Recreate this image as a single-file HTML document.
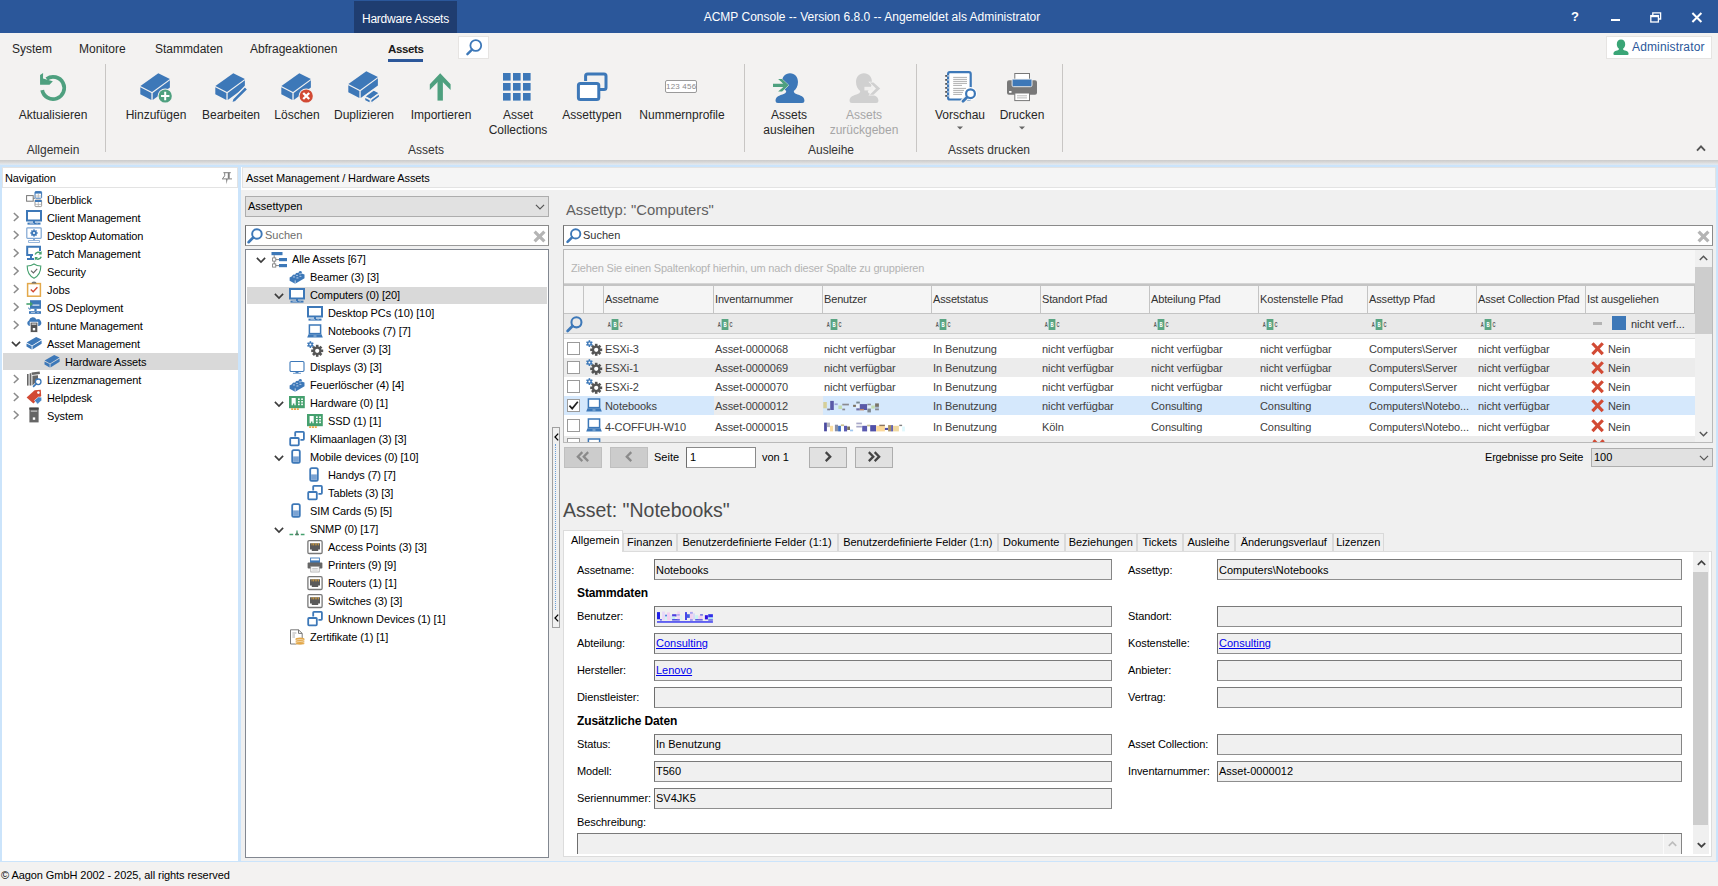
<!DOCTYPE html>
<html lang="de">
<head>
<meta charset="utf-8">
<title>ACMP Console</title>
<style>
*{box-sizing:border-box;margin:0;padding:0}
html,body{width:1718px;height:886px;overflow:hidden}
body{position:relative;background:#cbe4fb;font-family:"Liberation Sans",sans-serif;font-size:11px;color:#000;line-height:13px}
.abs{position:absolute}
.t{position:absolute;white-space:nowrap}
svg{position:absolute;overflow:visible}
#title{left:0;top:0;width:1718px;height:33px;background:#2b579a}
#ctx{left:354px;top:1px;width:103px;height:32px;background:#1f3d70;color:#fff;font-size:12px;line-height:14px}
#title .cap{left:0;width:1744px;text-align:center;top:10px;color:#fff;font-size:12px;line-height:14px}
#ribbon{left:0;top:33px;width:1718px;height:127px;background:#f3f2f1;font-size:12px;line-height:15px;color:#262626}
#ribshadow{left:0;top:160px;width:1718px;height:5px;background:linear-gradient(#cbcbcb,#dcdcdc 55%,#e2e6ea 80%,#dbe7f3)}
.rt{top:9px}
.sep{top:31px;width:1px;height:88px;background:#c8c6c4}
.bl{text-align:center;top:75px;transform:translateX(-50%)}
.gl{text-align:center;top:110px;transform:translateX(-50%);color:#333}
.dis{color:#a6a6a6}
.hdr{height:21px;top:167px;border:1px solid #e3e3e3;line-height:19px}
#status{left:0;top:862px;width:1718px;height:24px;background:#f3f2f1}
.row{position:absolute;left:0;height:18px;line-height:18px;white-space:nowrap}
.sel{background:#d9d9d9}
.combo{background:#e1e1e1;border:1px solid #adadad}
.sunk{background:#fff;border:1px solid #6e6e6e;border-top-color:#8a8a8a;border-right-color:#8a8a8a;border-bottom-color:#9a9a9a}
.inp{position:absolute;height:21px;background:#f0f0f0;border:1px solid #7a7a7a;border-left-color:#6e6e6e;border-right-color:#858585;border-bottom-color:#8e8e8e;line-height:19px;padding-left:1px;white-space:nowrap}
.lbl{position:absolute;white-space:nowrap;line-height:21px;letter-spacing:-0.1px}
a.lk{color:#0000ee;text-decoration:underline}
.gh{position:absolute;top:0;height:28px;border-right:1px solid #c4c4c4;line-height:26px;padding-left:1px;letter-spacing:-0.15px;white-space:nowrap;overflow:hidden}
.gc{position:absolute;top:0;height:100%;padding-left:1px;white-space:nowrap;overflow:hidden;color:#404040;letter-spacing:-0.08px}
.grow{position:absolute;left:1px;width:1131px;height:19px;line-height:19px}
.cb{position:absolute;left:3px;width:13px;height:13px;background:#fff;border:1px solid #9a9a9a}
.tab{position:absolute;top:365px;height:18px;background:#f0f0f0;border:1px solid #d9d9d9;border-bottom:none;line-height:16px;text-align:center;white-space:nowrap}
.pbtn{position:absolute;top:280px;height:21px;width:38px}
</style>
</head>
<body>
<svg width="0" height="0" style="position:absolute">
<defs>
<!-- 32px isometric box -->
<g id="bx32">
<path d="M1.4,14.1 L19.3,1.3 L30.9,7 L13,20 Z" fill="#3d78b8"/>
<path d="M1.3,15.2 L12.4,20.9 L12.4,28 L1.3,22.3 Z" fill="#3d78b8"/>
<path d="M13.7,20.9 L30.9,8.3 L30.9,15.4 L13.7,28 Z" fill="#3d78b8"/>
</g>
<!-- 16px box -->
<g id="bx16">
<path d="M0.6,7.6 L10.2,2 L15.6,4.6 L6,10.4 Z" fill="#3d78b8"/>
<path d="M0.5,8.5 L5.6,11.1 L5.6,14.4 L0.5,11.6 Z" fill="#3d78b8"/>
<path d="M6.5,11.1 L15.6,5.5 L15.6,8.8 L6.5,14.4 Z" fill="#3d78b8"/>
</g>
<!-- monitor 16 -->
<g id="mon">
<rect x="1" y="2" width="14" height="9.5" fill="#fff" stroke="#3d78b8" stroke-width="2"/>
<rect x="7" y="12" width="2" height="2" fill="#3d78b8"/>
<rect x="1.5" y="13.6" width="13" height="2" fill="#3d78b8"/>
<rect x="3.5" y="14.2" width="4.5" height="0.8" fill="#9dbbdc"/><rect x="10.5" y="14.2" width="1.2" height="0.8" fill="#9dbbdc"/>
</g>
<!-- laptop -->
<g id="lap">
<rect x="2.4" y="2" width="11.2" height="8.6" fill="#fff" stroke="#3d78b8" stroke-width="1.5"/>
<path d="M1.5,11.3 L14.5,11.3 L15.8,14.6 L0.2,14.6 Z" fill="#3d78b8"/>
<rect x="6.5" y="12.6" width="3" height="0.8" fill="#c4d6ea"/>
</g>
<!-- gears -->
<g id="gear">
<g transform="translate(10.2,9.8)">
<g fill="#555"><rect x="-1.3" y="-6" width="2.6" height="12"/><rect x="-1.3" y="-6" width="2.6" height="12" transform="rotate(45)"/><rect x="-1.3" y="-6" width="2.6" height="12" transform="rotate(90)"/><rect x="-1.3" y="-6" width="2.6" height="12" transform="rotate(135)"/></g>
<circle r="4.3" fill="#555"/><circle r="2.1" fill="#fff"/>
</g>
<g transform="translate(3.4,3.6)">
<g fill="#3d78b8"><rect x="-0.8" y="-3.4" width="1.6" height="6.8"/><rect x="-0.8" y="-3.4" width="1.6" height="6.8" transform="rotate(60)"/><rect x="-0.8" y="-3.4" width="1.6" height="6.8" transform="rotate(120)"/></g>
<circle r="2.3" fill="#3d78b8"/><circle r="1" fill="#fff"/>
</g>
</g>
<!-- display thin -->
<g id="disp">
<rect x="1" y="2.5" width="14" height="10" rx="1.2" fill="#fff" stroke="#3d78b8" stroke-width="1.1"/>
<rect x="6.5" y="12.5" width="3" height="1.6" fill="#3d78b8"/>
<rect x="4" y="13.8" width="8" height="1.2" fill="#8fb1d6"/>
</g>
<!-- lego brick -->
<g id="brick">
<path d="M0.6,8.4 L9.8,3.4 L15.5,5.6 L15.5,9.2 L6.2,14.8 L0.6,11.8 Z" fill="#3d78b8"/>
<path d="M6.2,11.4 L6.2,14.8" stroke="#dfe9f5" stroke-width="0.8"/>
<path d="M3.4,6.2 q1.5,-1.5 3,0 v1.2 h-3 Z M6.6,4.5 q1.5,-1.5 3,0 v1.2 h-3 Z M9.8,2.8 q1.5,-1.5 3,0 v1.2 h-3 Z" fill="#3d78b8"/>
<g fill="#a9c4e4"><ellipse cx="5" cy="7.9" rx="1.2" ry="0.6"/><ellipse cx="8" cy="6.3" rx="1.2" ry="0.6"/><ellipse cx="11" cy="4.8" rx="1.2" ry="0.6"/><ellipse cx="8.4" cy="8.9" rx="1.2" ry="0.6"/><ellipse cx="11.4" cy="7.3" rx="1.2" ry="0.6"/></g>
</g>
<!-- ram card -->
<g id="ram">
<rect x="0" y="1" width="15.8" height="12.2" fill="#45a06e"/>
<path d="M2.6,3 H6.7 V10.2 H5.4 V8.6 H3.9 V10.2 H2.6 Z" fill="#fff"/>
<g fill="#fff"><rect x="9" y="3.4" width="1.7" height="1.6"/><rect x="9" y="6" width="1.7" height="1.6"/><rect x="9" y="8.6" width="1.7" height="1.6"/><rect x="12.2" y="3.4" width="1.7" height="1.6"/><rect x="12.2" y="6" width="1.7" height="1.6"/><rect x="12.2" y="8.6" width="1.7" height="1.6"/></g>
<g fill="#e8a848"><rect x="2.2" y="13.2" width="2" height="1.8"/><rect x="5" y="13.2" width="2" height="1.8"/><rect x="7.8" y="13.2" width="2" height="1.8"/></g>
</g>
<!-- two windows -->
<g id="wins">
<path d="M6.2,5.6 L6.2,1.7 Q6.2,0.9 7,0.9 L14.1,0.9 Q14.9,0.9 14.9,1.7 L14.9,8 Q14.9,8.8 14.1,8.8 L11.4,8.8" fill="none" stroke="#3d78b8" stroke-width="1.8"/>
<rect x="1.2" y="7" width="8.6" height="7.4" rx="0.8" fill="#fff" stroke="#3d78b8" stroke-width="1.8"/>
</g>
<!-- phone -->
<g id="phone">
<rect x="3.2" y="1.2" width="7.6" height="12.6" rx="1.6" fill="#fff" stroke="#3d78b8" stroke-width="1.8"/>
<rect x="4.1" y="7.4" width="5.8" height="5.5" fill="#7ba3d3"/>
</g>
<!-- snmp -->
<g id="snmp">
<path d="M0.5,13.5 H4.2 M6,13.5 H10 M11.8,13.5 H15.5" stroke="#45a06e" stroke-width="1.3"/>
<path d="M8,13 V9.4" stroke="#45a06e" stroke-width="1.3"/>
<rect x="7.3" y="11.6" width="1.4" height="2.6" fill="#666"/>
</g>
<!-- network port -->
<g id="port">
<rect x="0.9" y="1.7" width="14.2" height="12.8" rx="1.2" fill="#fff" stroke="#777" stroke-width="1.3"/>
<path d="M3,4.2 H13 V10.4 H11.2 V12 H4.8 V10.4 H3 Z" fill="#5a5a5a"/>
<g fill="#d9a13b"><rect x="4.6" y="4.2" width="0.8" height="2.2"/><rect x="6.2" y="4.2" width="0.8" height="2.2"/><rect x="7.8" y="4.2" width="0.8" height="2.2"/><rect x="9.4" y="4.2" width="0.8" height="2.2"/><rect x="11" y="4.2" width="0.8" height="2.2"/></g>
</g>
<!-- printer small -->
<g id="prn">
<rect x="3.6" y="1" width="8.8" height="4.4" fill="#fff" stroke="#3d78b8" stroke-width="0.9"/>
<rect x="3.2" y="3.4" width="9.6" height="2.8" fill="#3d78b8"/>
<rect x="0.6" y="5.6" width="14.8" height="6" rx="0.8" fill="#666"/>
<rect x="3.8" y="9.4" width="8.4" height="5.6" fill="#fff" stroke="#999" stroke-width="0.7"/>
<path d="M5.2,11.4 H10.8 M5.2,13 H10.8" stroke="#aaa" stroke-width="0.7"/>
</g>
<!-- certificate -->
<g id="cert">
<path d="M1.5,0.8 H9.5 L13.2,4.4 V15 H1.5 Z" fill="#fff" stroke="#6b6b6b" stroke-width="0.9"/>
<path d="M9.5,0.8 V4.4 H13.2" fill="none" stroke="#6b6b6b" stroke-width="0.9"/>
<path d="M3.4,4 H7.4 M3.4,6 H6 M3.4,8 H6" stroke="#999" stroke-width="0.8"/>
<ellipse cx="11" cy="10.2" rx="4.6" ry="1.7" fill="#e3a84a"/><ellipse cx="11" cy="12.2" rx="4.6" ry="1.7" fill="#e3a84a" stroke="#fff" stroke-width="0.5"/><ellipse cx="11" cy="14.2" rx="4.6" ry="1.7" fill="#e3a84a" stroke="#fff" stroke-width="0.5"/>
</g>
<!-- tree root icon -->
<g id="tree">
<rect x="0.5" y="1" width="11" height="3.2" fill="#3d78b8"/>
<rect x="8" y="7" width="8" height="3.2" fill="#3d78b8"/>
<rect x="8" y="13" width="8" height="3.2" fill="#3d78b8"/>
<path d="M3.2,4.2 V14.6 M3.2,8.6 H8 M3.2,14.6 H8" stroke="#777" stroke-width="0.9" fill="none"/>
<rect x="1.6" y="6.9" width="3.2" height="3.2" fill="#fff" stroke="#777" stroke-width="0.8"/>
<rect x="1.6" y="12.9" width="3.2" height="3.2" fill="#fff" stroke="#777" stroke-width="0.8"/>
</g>
<!-- magnifier 16 -->
<g id="mag">
<circle cx="10.2" cy="6.2" r="4.9" fill="none" stroke="#3d78b8" stroke-width="2"/>
<path d="M6.4,9.8 L1.6,14.6" stroke="#3d78b8" stroke-width="2.7" stroke-linecap="round"/>
</g>
<!-- chevrons -->
<g id="chr"><path d="M0.8,0.8 L4.8,4.6 L0.8,8.4" fill="none" stroke="#8a8a8a" stroke-width="1.4"/></g>
<g id="chd"><path d="M0.8,0.8 L4.6,4.6 L8.4,0.8" fill="none" stroke="#3c3c3c" stroke-width="1.5"/></g>
<g id="chc"><path d="M0.8,0.8 L4.6,4.6 L8.4,0.8" fill="none" stroke="#555" stroke-width="1.1"/></g>
<!-- red x -->
<g id="rx"><path d="M1.4,1.2 L11.4,11.8 M11.4,1.2 L1.4,11.8" stroke="#d24a34" stroke-width="3.1"/></g>
<!-- nav: overview -->
<g id="ov">
<rect x="0.6" y="4.6" width="6.6" height="5.6" fill="#fff" stroke="#777" stroke-width="1"/>
<rect x="9" y="0.6" width="6.6" height="6.6" rx="0.8" fill="#fff" stroke="#3d78b8" stroke-width="1"/>
<rect x="9" y="0.6" width="6.6" height="2" fill="#3d78b8"/>
<path d="M12.3,2.6 V7.2 M9,5 H15.6" stroke="#aaa" stroke-width="0.7"/>
<rect x="9" y="9" width="6.6" height="6.6" rx="0.8" fill="#fff" stroke="#999" stroke-width="1"/>
<rect x="9" y="9" width="6.6" height="2" fill="#3d78b8"/>
<path d="M12.3,11 V15.6 M9,13.4 H15.6" stroke="#aaa" stroke-width="0.7"/>
<path d="M7.2,7.4 H9" stroke="#777" stroke-width="0.8"/>
</g>
<!-- nav: desktop automation -->
<g id="da">
<rect x="0.8" y="0.8" width="14.4" height="10.6" rx="0.8" fill="#fff" stroke="#7fa6d3" stroke-width="1.2"/>
<g transform="translate(8,6)"><g fill="#3d78b8"><rect x="-0.8" y="-3.6" width="1.6" height="7.2"/><rect x="-0.8" y="-3.6" width="1.6" height="7.2" transform="rotate(45)"/><rect x="-0.8" y="-3.6" width="1.6" height="7.2" transform="rotate(90)"/><rect x="-0.8" y="-3.6" width="1.6" height="7.2" transform="rotate(135)"/></g><circle r="2.6" fill="#3d78b8"/><circle r="1.1" fill="#fff"/></g>
<rect x="7" y="11.4" width="2" height="2" fill="#7fa6d3"/>
<rect x="2.6" y="13.6" width="10.8" height="1.8" fill="#fff" stroke="#7fa6d3" stroke-width="0.8"/>
</g>
<!-- nav: patch mgmt -->
<g id="pm">
<path d="M14,6 V1.8 H1.2 V10 H7" fill="none" stroke="#3d78b8" stroke-width="2"/>
<rect x="4" y="10.6" width="2" height="2.4" fill="#3d78b8"/>
<rect x="1" y="13" width="7" height="2" fill="#3d78b8"/>
<path d="M9.2,9.6 A3.4,3.4 0 0 1 15,8.4" fill="none" stroke="#45a06e" stroke-width="1.5"/>
<path d="M15.6,6 V9.4 H12.4 Z" fill="#45a06e"/>
<path d="M15.2,11.8 A3.4,3.4 0 0 1 9.4,13" fill="none" stroke="#45a06e" stroke-width="1.5"/>
<path d="M8.8,15.4 V12 H12 Z" fill="#45a06e"/>
</g>
<!-- nav: shield -->
<g id="sh">
<path d="M8,1 C10,2.4 12.4,3 14.8,3 C14.8,9 12.6,13 8,15.2 C3.4,13 1.2,9 1.2,3 C3.6,3 6,2.4 8,1 Z" fill="#fff" stroke="#45a06e" stroke-width="1.1"/>
<path d="M5,7.6 L7.4,10 L11.2,5.8" fill="none" stroke="#666" stroke-width="1.2"/>
</g>
<!-- nav: jobs -->
<g id="jb">
<rect x="1.6" y="2.6" width="12.8" height="12.6" fill="#fff" stroke="#e3a84a" stroke-width="1.5"/>
<path d="M5.4,2.6 Q5.4,0.6 8,0.6 Q10.6,0.6 10.6,2.6 Z" fill="#777"/>
<path d="M4.8,8.4 L7.2,10.8 L11.4,6.2" fill="none" stroke="#d24a34" stroke-width="1.4"/>
</g>
<!-- nav: OS deployment -->
<g id="os">
<rect x="4" y="1.2" width="11" height="8.6" fill="#3d78b8"/>
<rect x="6.4" y="5.6" width="7" height="1" fill="#fff"/>
<rect x="8.4" y="9.8" width="2.2" height="2.2" fill="#3d78b8"/>
<rect x="3" y="12.2" width="12" height="2.6" fill="#3d78b8"/>
<rect x="5" y="13.2" width="4" height="0.8" fill="#c4d6ea"/><rect x="11.4" y="13.2" width="1.2" height="0.8" fill="#c4d6ea"/>
<path d="M0.4,5 H5" stroke="#45a06e" stroke-width="1.6"/><path d="M4,2.4 L7,5 L4,7.6 Z" fill="#45a06e"/>
<path d="M2.6,8.6 Q2.6,10.4 4.4,10.4" fill="none" stroke="#3d78b8" stroke-width="1"/>
</g>
<!-- nav: intune -->
<g id="it">
<path d="M3.4,9 A3,3 0 0 1 3,3.4 A4,4 0 0 1 10.4,2.4 A3.4,3.4 0 0 1 13,9 Z" fill="#3d78b8"/>
<rect x="4.2" y="5.2" width="7.6" height="10.2" fill="#555" stroke="#fff" stroke-width="0.8"/>
<rect x="5.6" y="6.6" width="4.8" height="1" fill="#fff"/>
<rect x="6.8" y="11" width="2.4" height="2.4" fill="#fff"/>
</g>
<!-- nav: license -->
<g id="lz">
<rect x="1" y="3" width="1.6" height="11.6" fill="#666"/>
<path d="M3.6,2.4 L5.4,2 V14.6 H3.6 Z" fill="#666"/>
<path d="M5.6,1.6 L13.6,0.6 L14,3 L6.2,4 Z" fill="#666"/>
<path d="M6.4,4.8 L12,4.2 L12,9 L6.4,14.6 Z" fill="#666"/>
<circle cx="12.2" cy="10.8" r="2.8" fill="#fff" stroke="#3d78b8" stroke-width="1.3"/>
<path d="M10.2,12.8 L7.6,15.4" stroke="#3d78b8" stroke-width="1.7" stroke-linecap="round"/>
</g>
<!-- nav: helpdesk -->
<g id="hd">
<path d="M0.6,8.4 L8.6,1.2 L14.8,0.8 L15.2,7 L7.4,14.4 Z" fill="#d24a34"/>
<circle cx="12.4" cy="3.6" r="1.3" fill="#fff"/>
<path d="M8.4,11.4 L12.4,8 L15.6,8.2 L15.8,11.2 L11.6,15.2 Z" fill="#4a86c5" stroke="#fff" stroke-width="0.6"/>
</g>
<!-- nav: system tower -->
<g id="sy">
<rect x="3.4" y="0.6" width="9.2" height="14.8" fill="#666"/>
<rect x="3.4" y="0.6" width="9.2" height="2" fill="#444"/>
<rect x="4.8" y="3.6" width="6.4" height="1" fill="#ddd"/>
<rect x="6.8" y="10.4" width="2.4" height="2.4" fill="#fff"/>
</g>
<!-- user -->
<g id="usr">
<path d="M8,0.6 C10.6,0.6 12.2,2.6 12.2,5.2 C12.2,7.4 11.2,9 10,9.8 C10,10.6 10.4,11 12,11.6 C14.6,12.4 15.6,13 15.6,15 Q15.6,16 14.4,16 L1.6,16 Q0.4,16 0.4,15 C0.4,13 1.4,12.4 4,11.6 C5.6,11 6,10.6 6,9.8 C4.8,9 3.8,7.4 3.8,5.2 C3.8,2.6 5.4,0.6 8,0.6 Z"/>
</g>
</defs>
</svg>

<div id="title" class="abs">
<div id="ctx" class="abs"><span class="t" style="left:8px;top:11px;letter-spacing:-0.25px">Hardware Assets</span></div>
<div class="t cap">ACMP Console -- Version 6.8.0 -- Angemeldet als Administrator</div>
<span class="t" style="left:1571px;top:9px;color:#fff;font-weight:bold;font-size:13px;line-height:15px">?</span>
<div class="abs" style="left:1611px;top:19px;width:9px;height:2px;background:#fff"></div>
<svg style="left:1650px;top:12px" width="12" height="11" viewBox="0 0 12 11"><path d="M2.8,3 V0.8 H10.6 V7 H8.4" fill="none" stroke="#fff" stroke-width="1.3"/><rect x="0.8" y="3.6" width="7.6" height="6.4" fill="none" stroke="#fff" stroke-width="1.3"/><path d="M0.8,4.4 H8.4" stroke="#fff" stroke-width="1.6"/></svg>
<svg style="left:1691px;top:12px" width="12" height="11" viewBox="0 0 12 11"><path d="M1.4,1 L10.4,10 M10.4,1 L1.4,10" stroke="#fff" stroke-width="2"/></svg>
</div>
<div id="ribbon" class="abs">
<span class="t rt" style="left:12px">System</span>
<span class="t rt" style="left:79px">Monitore</span>
<span class="t rt" style="left:155px">Stammdaten</span>
<span class="t rt" style="left:250px">Abfrageaktionen</span>
<span class="t rt" style="left:388px;font-weight:bold;color:#1a1a1a;font-size:11.5px;letter-spacing:-0.35px">Assets</span>
<div class="abs" style="left:388px;top:26px;width:35px;height:3px;background:#2b579a"></div>
<div class="abs" style="left:458px;top:3px;width:31px;height:23px;background:#fff;border:1px solid #e6e4e2"></div>
<svg style="left:465px;top:5px" width="20" height="20" viewBox="0 0 20 20"><circle cx="10.8" cy="7.5" r="5.4" fill="none" stroke="#3d78b8" stroke-width="1.8"/><path d="M7,11.6 L2.4,16.2" stroke="#3d78b8" stroke-width="2.4" stroke-linecap="round"/></svg>
<div class="abs" style="left:1606px;top:3px;width:106px;height:23px;background:#fff;border:1px solid #e6e4e2"></div>
<svg style="left:1613px;top:6px" width="16" height="16" viewBox="0 0 16 16" fill="#3aa576"><use href="#usr"/></svg>
<span class="t" style="left:1632px;top:7px;color:#2b579a;letter-spacing:0.15px">Administrator</span>
<div class="abs sep" style="left:105px"></div>
<div class="abs sep" style="left:744px"></div>
<div class="abs sep" style="left:916px"></div>
<div class="abs sep" style="left:1062px"></div>
<span class="t bl" style="left:53px">Aktualisieren</span>
<span class="t bl" style="left:156px">Hinzufügen</span>
<span class="t bl" style="left:231px">Bearbeiten</span>
<span class="t bl" style="left:297px">Löschen</span>
<span class="t bl" style="left:364px">Duplizieren</span>
<span class="t bl" style="left:441px">Importieren</span>
<span class="t bl" style="left:518px">Asset<br>Collections</span>
<span class="t bl" style="left:592px">Assettypen</span>
<span class="t bl" style="left:682px">Nummernprofile</span>
<span class="t bl" style="left:789px">Assets<br>ausleihen</span>
<span class="t bl dis" style="left:864px">Assets<br>zurückgeben</span>
<span class="t bl" style="left:960px">Vorschau</span>
<span class="t bl" style="left:1022px">Drucken</span>
<span class="t gl" style="left:53px">Allgemein</span>
<span class="t gl" style="left:426px">Assets</span>
<span class="t gl" style="left:831px">Ausleihe</span>
<span class="t gl" style="left:989px">Assets drucken</span>
<svg style="left:37px;top:37px" width="32" height="32" viewBox="0 0 32 32"><path d="M9.66,8.95 A11.1,11.1 0 1 1 5.2,20.1" fill="none" stroke="#4ea07f" stroke-width="3.8"/><path d="M3.06,5 L6.1,3 L6,8.56 L15.85,11.17 L12.5,14.7 L3.06,14.7 Z" fill="#4ea07f"/></svg>
<svg style="left:139px;top:39px" width="34" height="32" viewBox="0 0 34 32"><use href="#bx32"/><circle cx="26.2" cy="24" r="7.6" fill="#f3f2f1"/><circle cx="26.2" cy="24" r="6.6" fill="#4ea07f"/><path d="M26.2,19.8 V28.2 M22,24 H30.4" stroke="#fff" stroke-width="2"/></svg>
<svg style="left:214px;top:39px" width="34" height="32" viewBox="0 0 34 32"><use href="#bx32"/><path d="M31,14.6 L33.8,17.4 L21.6,29.6 L17.4,31 L18.8,26.8 Z" fill="#3d78b8" stroke="#f3f2f1" stroke-width="1.4"/></svg>
<svg style="left:280px;top:39px" width="34" height="32" viewBox="0 0 34 32"><use href="#bx32"/><circle cx="26.2" cy="24" r="7.6" fill="#f3f2f1"/><circle cx="26.2" cy="24" r="6.6" fill="#d24a34"/><path d="M23.2,21 L29.2,27 M29.2,21 L23.2,27" stroke="#fff" stroke-width="2.3"/></svg>
<svg style="left:347px;top:37px" width="34" height="34" viewBox="0 0 34 34"><use href="#bx32"/><g transform="translate(17,19.4) scale(0.5)" stroke="#f3f2f1" stroke-width="2.4"><use href="#bx32"/></g></svg>
<svg style="left:428px;top:39px" width="24" height="30" viewBox="0 0 24 30"><path d="M12.2,5 V28.6" stroke="#4ea07f" stroke-width="5.4"/><path d="M1.8,18 V12.2 L12.2,1.2 L22.6,12.2 V18 L12.2,7.4 Z" fill="#4ea07f"/></svg>
<svg style="left:503px;top:40px" width="28" height="28" viewBox="0 0 28 28"><rect x="0" y="0" width="7.6" height="7.6" fill="#3d78b8"/><rect x="0" y="10" width="7.6" height="7.6" fill="#3d78b8"/><rect x="0" y="20" width="7.6" height="7.6" fill="#3d78b8"/><rect x="10" y="0" width="7.6" height="7.6" fill="#3d78b8"/><rect x="10" y="10" width="7.6" height="7.6" fill="#3d78b8"/><rect x="10" y="20" width="7.6" height="7.6" fill="#3d78b8"/><rect x="20" y="0" width="7.6" height="7.6" fill="#3d78b8"/><rect x="20" y="10" width="7.6" height="7.6" fill="#3d78b8"/><rect x="20" y="20" width="7.6" height="7.6" fill="#3d78b8"/></svg>
<svg style="left:576px;top:39px" width="32" height="30" viewBox="0 0 32 30"><path d="M9.6,9 V4 Q9.6,2 11.6,2 L28,2 Q30,2 30,4 L30,15.6 Q30,17.6 28,17.6 L24,17.6" fill="none" stroke="#3d78b8" stroke-width="3"/><rect x="2.4" y="11.4" width="20.4" height="16" rx="2" fill="#fff" stroke="#3d78b8" stroke-width="3"/></svg>
<div class="abs" style="left:665px;top:47px;width:32px;height:13px;background:#fff;border:1px solid #9a9a9a;border-radius:2px;font-size:8px;line-height:11px;text-align:center;color:#8a8a8a;letter-spacing:0.2px;white-space:nowrap">123 456</div>
<svg style="left:773px;top:39px" width="33" height="31" viewBox="0 0 33 31"><g transform="translate(1.8,0) scale(1.9,1.93)" fill="#3d78b8"><use href="#usr"/></g><path d="M5.1,7.1 L9.1,7.1 L15.7,13.3 L9.1,19.5 L5.1,19.5 L10.4,14.9 L0,14.9 L0,11.8 L10.4,11.8 Z" fill="#4ea07f" stroke="#f3f2f1" stroke-width="1" paint-order="stroke"/></svg>
<svg style="left:847px;top:39px" width="34" height="31" viewBox="0 0 34 31"><g transform="translate(1.8,0) scale(1.9,1.93)" fill="#d0d0d0"><use href="#usr"/></g><rect x="17.4" y="14.8" width="8.6" height="3.6" fill="#f0efee"/><path d="M22.8,10.4 L26.5,10.4 L33.2,16.6 L26.5,22.8 L22.8,22.8 L29,16.6 Z" fill="#d0d0d0" stroke="#f3f2f1" stroke-width="1.2" paint-order="stroke"/></svg>
<svg style="left:945px;top:38px" width="32" height="32" viewBox="0 0 32 32"><rect x="3.1" y="1.2" width="22.6" height="27.3" rx="1.8" fill="#fff" stroke="#3d78b8" stroke-width="2.2"/><path d="M8.2,6.4 H22" stroke="#a6a6a6" stroke-width="0.9"/><path d="M8.2,8.4 H22" stroke="#a6a6a6" stroke-width="0.9"/><path d="M8.2,10.4 H22" stroke="#a6a6a6" stroke-width="0.9"/><path d="M8.2,12.4 H22" stroke="#a6a6a6" stroke-width="0.9"/><path d="M8.2,14.4 H17" stroke="#a6a6a6" stroke-width="0.9"/><path d="M8.2,17.4 H21" stroke="#a6a6a6" stroke-width="0.9"/><path d="M8.2,19.4 H19" stroke="#a6a6a6" stroke-width="0.9"/><path d="M8.2,21.4 H18" stroke="#a6a6a6" stroke-width="0.9"/><path d="M8.2,23.4 H17" stroke="#a6a6a6" stroke-width="0.9"/><rect x="0.2" y="4" width="2" height="1.8" fill="#555"/><rect x="2.2" y="4.3" width="2.2" height="1.2" fill="#c9d9ec"/><rect x="0.2" y="8" width="2" height="1.8" fill="#555"/><rect x="2.2" y="8.3" width="2.2" height="1.2" fill="#c9d9ec"/><rect x="0.2" y="12" width="2" height="1.8" fill="#555"/><rect x="2.2" y="12.3" width="2.2" height="1.2" fill="#c9d9ec"/><rect x="0.2" y="16" width="2" height="1.8" fill="#555"/><rect x="2.2" y="16.3" width="2.2" height="1.2" fill="#c9d9ec"/><rect x="0.2" y="20" width="2" height="1.8" fill="#555"/><rect x="2.2" y="20.3" width="2.2" height="1.2" fill="#c9d9ec"/><rect x="0.2" y="24" width="2" height="1.8" fill="#555"/><rect x="2.2" y="24.3" width="2.2" height="1.2" fill="#c9d9ec"/><path d="M21.6,26.6 L17.8,30.4" stroke="#f3f2f1" stroke-width="5" stroke-linecap="round"/><circle cx="25.5" cy="22.7" r="6.6" fill="#fff"/><circle cx="25.5" cy="22.7" r="4.4" fill="#fff" stroke="#3d78b8" stroke-width="2.2"/><path d="M22,26.2 L18,30.2" stroke="#3d78b8" stroke-width="2.8" stroke-linecap="round"/></svg>
<svg style="left:1006px;top:39px" width="32" height="30" viewBox="0 0 32 30"><rect x="8.8" y="1.5" width="14.7" height="7" fill="#fff" stroke="#777" stroke-width="1"/><rect x="1" y="8.2" width="30" height="14.5" rx="2" fill="#787878"/><path d="M6.1,7.1 H26 V13.2 Q26,14.7 24.5,14.7 H7.6 Q6.1,14.7 6.1,13.2 Z" fill="#3d78b8" stroke="#f3f2f1" stroke-width="0.9"/><rect x="8.8" y="21" width="14.7" height="7.6" fill="#fff" stroke="#777" stroke-width="1"/><path d="M11,23.8 H21 M11,25.9 H21" stroke="#b0b0b0" stroke-width="0.9"/><rect x="3.1" y="19" width="2.4" height="1.8" fill="#fff"/></svg>
<svg style="left:957px;top:93px" width="6" height="4" viewBox="0 0 6 4"><path d="M0,0.4 H6 L3,3.6 Z" fill="#666"/></svg>
<svg style="left:1019px;top:93px" width="6" height="4" viewBox="0 0 6 4"><path d="M0,0.4 H6 L3,3.6 Z" fill="#666"/></svg>
<svg style="left:1695.5px;top:111.6px" width="10" height="6.4" viewBox="0 0 10 6.4"><path d="M1,5.6 L5,1.4 L9,5.6" fill="none" stroke="#555" stroke-width="1.9"/></svg>
</div>
<div id="ribshadow" class="abs"></div>
<div id="nav" class="abs" style="left:2px;top:167px;width:236px;height:694px;background:#fff;letter-spacing:-0.12px">
<div class="abs hdr" style="left:0;top:0;width:236px;background:#fff"><span class="t" style="left:2px;top:1px;line-height:19px">Navigation</span></div>
<svg style="left:220px;top:5.1px" width="10" height="12.4" viewBox="0 0 10 12.4"><path d="M1.4,0.7 H8.8 M2.7,0.7 V3.8 L0.6,6.6 M0,6.9 H10" fill="none" stroke="#808080" stroke-width="1"/><rect x="5.8" y="0.7" width="1.9" height="6" fill="#808080"/><path d="M4,7 H5.6 L4.6,12.2 Z" fill="#808080"/></svg>
<svg style="left:24px;top:24px" width="16" height="16" viewBox="0 0 16 16" ><use href="#ov"/></svg>
<span class="t" style="left:45px;top:24px;line-height:19px">Überblick</span>
<svg style="left:11px;top:45px" width="6" height="10" viewBox="0 0 5.6 9.2"><use href="#chr"/></svg>
<svg style="left:24px;top:42px" width="16" height="16" viewBox="0 0 16 16" ><use href="#mon"/></svg>
<span class="t" style="left:45px;top:42px;line-height:19px">Client Management</span>
<svg style="left:11px;top:63px" width="6" height="10" viewBox="0 0 5.6 9.2"><use href="#chr"/></svg>
<svg style="left:24px;top:60px" width="16" height="16" viewBox="0 0 16 16" ><use href="#da"/></svg>
<span class="t" style="left:45px;top:60px;line-height:19px">Desktop Automation</span>
<svg style="left:11px;top:81px" width="6" height="10" viewBox="0 0 5.6 9.2"><use href="#chr"/></svg>
<svg style="left:24px;top:78px" width="16" height="16" viewBox="0 0 16 16" ><use href="#pm"/></svg>
<span class="t" style="left:45px;top:78px;line-height:19px">Patch Management</span>
<svg style="left:11px;top:99px" width="6" height="10" viewBox="0 0 5.6 9.2"><use href="#chr"/></svg>
<svg style="left:24px;top:96px" width="16" height="16" viewBox="0 0 16 16" ><use href="#sh"/></svg>
<span class="t" style="left:45px;top:96px;line-height:19px">Security</span>
<svg style="left:11px;top:117px" width="6" height="10" viewBox="0 0 5.6 9.2"><use href="#chr"/></svg>
<svg style="left:24px;top:114px" width="16" height="16" viewBox="0 0 16 16" ><use href="#jb"/></svg>
<span class="t" style="left:45px;top:114px;line-height:19px">Jobs</span>
<svg style="left:11px;top:135px" width="6" height="10" viewBox="0 0 5.6 9.2"><use href="#chr"/></svg>
<svg style="left:24px;top:132px" width="16" height="16" viewBox="0 0 16 16" ><use href="#os"/></svg>
<span class="t" style="left:45px;top:132px;line-height:19px">OS Deployment</span>
<svg style="left:11px;top:153px" width="6" height="10" viewBox="0 0 5.6 9.2"><use href="#chr"/></svg>
<svg style="left:24px;top:150px" width="16" height="16" viewBox="0 0 16 16" ><use href="#it"/></svg>
<span class="t" style="left:45px;top:150px;line-height:19px">Intune Management</span>
<svg style="left:9px;top:174px" width="10" height="6" viewBox="0 0 9.2 5.6"><use href="#chd"/></svg>
<svg style="left:24px;top:168px" width="16" height="16" viewBox="0 0 16 16" ><use href="#bx16"/></svg>
<span class="t" style="left:45px;top:168px;line-height:19px">Asset Management</span>
<div class="abs sel" style="left:1px;top:186px;width:235px;height:17px"></div>
<svg style="left:42px;top:186px" width="16" height="16" viewBox="0 0 16 16" ><use href="#bx16"/></svg>
<span class="t" style="left:63px;top:186px;line-height:19px">Hardware Assets</span>
<svg style="left:11px;top:207px" width="6" height="10" viewBox="0 0 5.6 9.2"><use href="#chr"/></svg>
<svg style="left:24px;top:204px" width="16" height="16" viewBox="0 0 16 16" ><use href="#lz"/></svg>
<span class="t" style="left:45px;top:204px;line-height:19px">Lizenzmanagement</span>
<svg style="left:11px;top:225px" width="6" height="10" viewBox="0 0 5.6 9.2"><use href="#chr"/></svg>
<svg style="left:24px;top:222px" width="16" height="16" viewBox="0 0 16 16" ><use href="#hd"/></svg>
<span class="t" style="left:45px;top:222px;line-height:19px">Helpdesk</span>
<svg style="left:11px;top:243px" width="6" height="10" viewBox="0 0 5.6 9.2"><use href="#chr"/></svg>
<svg style="left:24px;top:240px" width="16" height="16" viewBox="0 0 16 16" ><use href="#sy"/></svg>
<span class="t" style="left:45px;top:240px;line-height:19px">System</span>
</div>
<div id="main" class="abs" style="left:241px;top:167px;width:1475px;height:694px;background:#f0f0f0">
<div class="abs" style="left:0;top:0;width:1475px;height:23px;background:#fff"></div>
<div class="abs hdr" style="left:1px;top:0;width:1474px;background:#f5f5f5"><span class="t" style="left:3px;top:1px;line-height:19px;letter-spacing:-0.1px">Asset Management / Hardware Assets</span></div>
<div class="abs combo" style="left:4px;top:29px;width:304px;height:21px"><span class="t" style="left:2px;top:0;line-height:19px">Assettypen</span><svg style="left:289px;top:7px" width="10" height="6" viewBox="0 0 9.2 5.6"><use href="#chc"/></svg></div>
<div class="abs sunk" style="left:4px;top:58px;width:304px;height:21px"><svg style="left:1.1px;top:2.3px" width="15.6" height="15.6" viewBox="0 0 16 16"><use href="#mag"/></svg><span class="t" style="left:19px;top:0;line-height:18px;color:#6d6d6d">Suchen</span><svg style="left:287px;top:4px" width="13" height="13" viewBox="0 0 13 13"><path d="M1.6,1.6 L11.4,11.4 M11.4,1.6 L1.6,11.4" stroke="#b4b4b4" stroke-width="3.2"/></svg></div>
<div class="abs" style="left:4px;top:82px;width:304px;height:609px;background:#fff;border:1px solid #828790;letter-spacing:-0.1px">
<svg style="left:9.5px;top:6.5px" width="10" height="6.1" viewBox="0 0 9.2 5.6"><use href="#chd"/></svg>
<svg style="left:25px;top:1px" width="16" height="16" viewBox="0 0 16 16" ><use href="#tree"/></svg>
<span class="t" style="left:46px;top:1px;line-height:17px">Alle Assets [67]</span>
<svg style="left:43px;top:19px" width="16" height="16" viewBox="0 0 16 16" ><use href="#brick"/></svg>
<span class="t" style="left:64px;top:19px;line-height:17px">Beamer (3) [3]</span>
<div class="abs sel" style="left:1px;top:37px;width:300px;height:17px"></div>
<svg style="left:27.5px;top:42.5px" width="10" height="6.1" viewBox="0 0 9.2 5.6"><use href="#chd"/></svg>
<svg style="left:43px;top:37px" width="16" height="16" viewBox="0 0 16 16" ><use href="#mon"/></svg>
<span class="t" style="left:64px;top:37px;line-height:17px">Computers (0) [20]</span>
<svg style="left:61px;top:55px" width="16" height="16" viewBox="0 0 16 16" ><use href="#mon"/></svg>
<span class="t" style="left:82px;top:55px;line-height:17px">Desktop PCs (10) [10]</span>
<svg style="left:61px;top:73px" width="16" height="16" viewBox="0 0 16 16" ><use href="#lap"/></svg>
<span class="t" style="left:82px;top:73px;line-height:17px">Notebooks (7) [7]</span>
<svg style="left:61px;top:91px" width="16" height="16" viewBox="0 0 16 16" ><use href="#gear"/></svg>
<span class="t" style="left:82px;top:91px;line-height:17px">Server (3) [3]</span>
<svg style="left:43px;top:109px" width="16" height="16" viewBox="0 0 16 16" ><use href="#disp"/></svg>
<span class="t" style="left:64px;top:109px;line-height:17px">Displays (3) [3]</span>
<svg style="left:43px;top:127px" width="16" height="16" viewBox="0 0 16 16" ><use href="#brick"/></svg>
<span class="t" style="left:64px;top:127px;line-height:17px">Feuerlöscher (4) [4]</span>
<svg style="left:27.5px;top:150.5px" width="10" height="6.1" viewBox="0 0 9.2 5.6"><use href="#chd"/></svg>
<svg style="left:43px;top:145px" width="16" height="16" viewBox="0 0 16 16" ><use href="#ram"/></svg>
<span class="t" style="left:64px;top:145px;line-height:17px">Hardware (0) [1]</span>
<svg style="left:61px;top:163px" width="16" height="16" viewBox="0 0 16 16" ><use href="#ram"/></svg>
<span class="t" style="left:82px;top:163px;line-height:17px">SSD (1) [1]</span>
<svg style="left:43px;top:181px" width="16" height="16" viewBox="0 0 16 16" ><use href="#wins"/></svg>
<span class="t" style="left:64px;top:181px;line-height:17px">Klimaanlagen (3) [3]</span>
<svg style="left:27.5px;top:204.5px" width="10" height="6.1" viewBox="0 0 9.2 5.6"><use href="#chd"/></svg>
<svg style="left:43px;top:199px" width="16" height="16" viewBox="0 0 16 16" ><use href="#phone"/></svg>
<span class="t" style="left:64px;top:199px;line-height:17px">Mobile devices (0) [10]</span>
<svg style="left:61px;top:217px" width="16" height="16" viewBox="0 0 16 16" ><use href="#phone"/></svg>
<span class="t" style="left:82px;top:217px;line-height:17px">Handys (7) [7]</span>
<svg style="left:61px;top:235px" width="16" height="16" viewBox="0 0 16 16" ><use href="#wins"/></svg>
<span class="t" style="left:82px;top:235px;line-height:17px">Tablets (3) [3]</span>
<svg style="left:43px;top:253px" width="16" height="16" viewBox="0 0 16 16" ><use href="#phone"/></svg>
<span class="t" style="left:64px;top:253px;line-height:17px">SIM Cards (5) [5]</span>
<svg style="left:27.5px;top:276.5px" width="10" height="6.1" viewBox="0 0 9.2 5.6"><use href="#chd"/></svg>
<svg style="left:43px;top:271px" width="16" height="16" viewBox="0 0 16 16" ><use href="#snmp"/></svg>
<span class="t" style="left:64px;top:271px;line-height:17px">SNMP (0) [17]</span>
<svg style="left:61px;top:289px" width="16" height="16" viewBox="0 0 16 16" ><use href="#port"/></svg>
<span class="t" style="left:82px;top:289px;line-height:17px">Access Points (3) [3]</span>
<svg style="left:61px;top:307px" width="16" height="16" viewBox="0 0 16 16" ><use href="#prn"/></svg>
<span class="t" style="left:82px;top:307px;line-height:17px">Printers (9) [9]</span>
<svg style="left:61px;top:325px" width="16" height="16" viewBox="0 0 16 16" ><use href="#port"/></svg>
<span class="t" style="left:82px;top:325px;line-height:17px">Routers (1) [1]</span>
<svg style="left:61px;top:343px" width="16" height="16" viewBox="0 0 16 16" ><use href="#port"/></svg>
<span class="t" style="left:82px;top:343px;line-height:17px">Switches (3) [3]</span>
<svg style="left:61px;top:361px" width="16" height="16" viewBox="0 0 16 16" ><use href="#wins"/></svg>
<span class="t" style="left:82px;top:361px;line-height:17px">Unknown Devices (1) [1]</span>
<svg style="left:43px;top:379px" width="16" height="16" viewBox="0 0 16 16" ><use href="#cert"/></svg>
<span class="t" style="left:64px;top:379px;line-height:17px">Zertifikate (1) [1]</span>
</div>
<div class="abs" style="left:311px;top:260px;width:8px;height:201px;border:1px solid #a0a0a0;background:#f0f0f0"><div class="abs" style="left:2px;top:16px;width:0;height:166px;border-left:1px dotted #6aa0dc"></div><svg style="left:1px;top:5px" width="5" height="8" viewBox="0 0 5 8"><path d="M4.2,0.6 L1,4 L4.2,7.4" fill="none" stroke="#000" stroke-width="1.3"/></svg><svg style="left:1px;top:186px" width="5" height="8" viewBox="0 0 5 8"><path d="M4.2,0.6 L1,4 L4.2,7.4" fill="none" stroke="#000" stroke-width="1.3"/></svg></div>
<span class="t" style="left:325px;top:33px;font-size:14.8px;line-height:20px;color:#606060">Assettyp: &quot;Computers&quot;</span>
<div class="abs sunk" style="left:322px;top:58px;width:1150px;height:21px"><svg style="left:1.8px;top:2.4px" width="15.2" height="15.2" viewBox="0 0 16 16"><use href="#mag"/></svg><span class="t" style="left:19px;top:0;line-height:18px;color:#333">Suchen</span><svg style="left:1133px;top:4px" width="13" height="13" viewBox="0 0 13 13"><path d="M1.6,1.6 L11.4,11.4 M11.4,1.6 L1.6,11.4" stroke="#b4b4b4" stroke-width="3.2"/></svg></div>
<div class="abs" style="left:322px;top:82px;width:1150px;height:194px;background:#fff;border:1px solid #b9b9b9;overflow:hidden">
<div class="abs" style="left:0;top:0;width:1131px;height:34px;background:#f7f7f7;border-bottom:1px solid #d4d4d4"><span class="t" style="left:7px;top:12px;color:#b4b4b4;letter-spacing:-0.17px">Ziehen Sie einen Spaltenkopf hierhin, um nach dieser Spalte zu gruppieren</span></div>
<div class="abs" style="left:0;top:34px;width:1131px;height:30px;background:#f5f5f5;border-top:2px solid #c4c4c4;border-bottom:1px solid #c4c4c4">
<div class="gh" style="left:0px;width:20px;color:#333"></div>
<div class="gh" style="left:20px;width:20px;color:#333"></div>
<div class="gh" style="left:40px;width:110px;color:#333">Assetname</div>
<div class="gh" style="left:150px;width:109px;color:#333">Inventarnummer</div>
<div class="gh" style="left:259px;width:109px;color:#333">Benutzer</div>
<div class="gh" style="left:368px;width:109px;color:#333">Assetstatus</div>
<div class="gh" style="left:477px;width:109px;color:#333">Standort Pfad</div>
<div class="gh" style="left:586px;width:109px;color:#333">Abteilung Pfad</div>
<div class="gh" style="left:695px;width:109px;color:#333">Kostenstelle Pfad</div>
<div class="gh" style="left:804px;width:109px;color:#333">Assettyp Pfad</div>
<div class="gh" style="left:913px;width:109px;color:#333">Asset Collection Pfad</div>
<div class="gh" style="left:1022px;width:109px;color:#333">Ist ausgeliehen</div>
</div>
<div class="abs" style="left:0;top:64px;width:1131px;height:20px;background:#e9e9e9;border-bottom:1px solid #cfcfcf">
<svg style="left:2.4px;top:1.6px" width="16.4" height="16.4" viewBox="0 0 16 16"><use href="#mag"/></svg>
<svg style="left:43px;top:4.5px;font-family:'Liberation Sans',sans-serif;font-weight:bold;font-size:6.5px" width="16" height="11" viewBox="0 0 16 11"><rect x="4.6" y="0" width="6.8" height="11" fill="#5aa583"/><text x="0.8" y="7.8" fill="#555" textLength="3" lengthAdjust="spacingAndGlyphs">A</text><text x="6.4" y="7.9" fill="#fff" textLength="3.2" lengthAdjust="spacingAndGlyphs">B</text><text x="12.6" y="7.8" fill="#555" textLength="3" lengthAdjust="spacingAndGlyphs">C</text></svg>
<svg style="left:153px;top:4.5px;font-family:'Liberation Sans',sans-serif;font-weight:bold;font-size:6.5px" width="16" height="11" viewBox="0 0 16 11"><rect x="4.6" y="0" width="6.8" height="11" fill="#5aa583"/><text x="0.8" y="7.8" fill="#555" textLength="3" lengthAdjust="spacingAndGlyphs">A</text><text x="6.4" y="7.9" fill="#fff" textLength="3.2" lengthAdjust="spacingAndGlyphs">B</text><text x="12.6" y="7.8" fill="#555" textLength="3" lengthAdjust="spacingAndGlyphs">C</text></svg>
<svg style="left:262px;top:4.5px;font-family:'Liberation Sans',sans-serif;font-weight:bold;font-size:6.5px" width="16" height="11" viewBox="0 0 16 11"><rect x="4.6" y="0" width="6.8" height="11" fill="#5aa583"/><text x="0.8" y="7.8" fill="#555" textLength="3" lengthAdjust="spacingAndGlyphs">A</text><text x="6.4" y="7.9" fill="#fff" textLength="3.2" lengthAdjust="spacingAndGlyphs">B</text><text x="12.6" y="7.8" fill="#555" textLength="3" lengthAdjust="spacingAndGlyphs">C</text></svg>
<svg style="left:371px;top:4.5px;font-family:'Liberation Sans',sans-serif;font-weight:bold;font-size:6.5px" width="16" height="11" viewBox="0 0 16 11"><rect x="4.6" y="0" width="6.8" height="11" fill="#5aa583"/><text x="0.8" y="7.8" fill="#555" textLength="3" lengthAdjust="spacingAndGlyphs">A</text><text x="6.4" y="7.9" fill="#fff" textLength="3.2" lengthAdjust="spacingAndGlyphs">B</text><text x="12.6" y="7.8" fill="#555" textLength="3" lengthAdjust="spacingAndGlyphs">C</text></svg>
<svg style="left:480px;top:4.5px;font-family:'Liberation Sans',sans-serif;font-weight:bold;font-size:6.5px" width="16" height="11" viewBox="0 0 16 11"><rect x="4.6" y="0" width="6.8" height="11" fill="#5aa583"/><text x="0.8" y="7.8" fill="#555" textLength="3" lengthAdjust="spacingAndGlyphs">A</text><text x="6.4" y="7.9" fill="#fff" textLength="3.2" lengthAdjust="spacingAndGlyphs">B</text><text x="12.6" y="7.8" fill="#555" textLength="3" lengthAdjust="spacingAndGlyphs">C</text></svg>
<svg style="left:589px;top:4.5px;font-family:'Liberation Sans',sans-serif;font-weight:bold;font-size:6.5px" width="16" height="11" viewBox="0 0 16 11"><rect x="4.6" y="0" width="6.8" height="11" fill="#5aa583"/><text x="0.8" y="7.8" fill="#555" textLength="3" lengthAdjust="spacingAndGlyphs">A</text><text x="6.4" y="7.9" fill="#fff" textLength="3.2" lengthAdjust="spacingAndGlyphs">B</text><text x="12.6" y="7.8" fill="#555" textLength="3" lengthAdjust="spacingAndGlyphs">C</text></svg>
<svg style="left:698px;top:4.5px;font-family:'Liberation Sans',sans-serif;font-weight:bold;font-size:6.5px" width="16" height="11" viewBox="0 0 16 11"><rect x="4.6" y="0" width="6.8" height="11" fill="#5aa583"/><text x="0.8" y="7.8" fill="#555" textLength="3" lengthAdjust="spacingAndGlyphs">A</text><text x="6.4" y="7.9" fill="#fff" textLength="3.2" lengthAdjust="spacingAndGlyphs">B</text><text x="12.6" y="7.8" fill="#555" textLength="3" lengthAdjust="spacingAndGlyphs">C</text></svg>
<svg style="left:807px;top:4.5px;font-family:'Liberation Sans',sans-serif;font-weight:bold;font-size:6.5px" width="16" height="11" viewBox="0 0 16 11"><rect x="4.6" y="0" width="6.8" height="11" fill="#5aa583"/><text x="0.8" y="7.8" fill="#555" textLength="3" lengthAdjust="spacingAndGlyphs">A</text><text x="6.4" y="7.9" fill="#fff" textLength="3.2" lengthAdjust="spacingAndGlyphs">B</text><text x="12.6" y="7.8" fill="#555" textLength="3" lengthAdjust="spacingAndGlyphs">C</text></svg>
<svg style="left:916px;top:4.5px;font-family:'Liberation Sans',sans-serif;font-weight:bold;font-size:6.5px" width="16" height="11" viewBox="0 0 16 11"><rect x="4.6" y="0" width="6.8" height="11" fill="#5aa583"/><text x="0.8" y="7.8" fill="#555" textLength="3" lengthAdjust="spacingAndGlyphs">A</text><text x="6.4" y="7.9" fill="#fff" textLength="3.2" lengthAdjust="spacingAndGlyphs">B</text><text x="12.6" y="7.8" fill="#555" textLength="3" lengthAdjust="spacingAndGlyphs">C</text></svg>
<div class="abs" style="left:1029px;top:8px;width:9px;height:3px;background:#b4b4b4"></div>
<div class="abs" style="left:1048px;top:2px;width:14px;height:14px;background:#3d78b8"></div>
<span class="t" style="left:1067px;top:0;line-height:20px;color:#333">nicht verf...</span>
</div>
<div class="abs" style="left:0;top:84px;width:1131px;height:5px;background:#f3f3f3;border-bottom:1px solid #dcdcdc"></div>
<div class="grow" style="top:89px;height:19px;line-height:21px;background:#fff;left:0;width:1131px">
<div class="cb" style="top:3px"></div>
<svg style="left:22px;top:1px" width="16" height="16" viewBox="0 0 16 16" ><use href="#gear"/></svg>
<div class="gc" style="left:40px;width:110px">ESXi-3</div>
<div class="gc" style="left:150px;width:109px">Asset-0000068</div>
<div class="gc" style="left:259px;width:109px">nicht verfügbar</div>
<div class="gc" style="left:368px;width:109px">In Benutzung</div>
<div class="gc" style="left:477px;width:109px">nicht verfügbar</div>
<div class="gc" style="left:586px;width:109px">nicht verfügbar</div>
<div class="gc" style="left:695px;width:109px">nicht verfügbar</div>
<div class="gc" style="left:804px;width:109px">Computers\Server</div>
<div class="gc" style="left:913px;width:109px">nicht verfügbar</div>
<svg style="left:1026.8px;top:3px" width="13" height="13.4" viewBox="0 0 12.6 13"><use href="#rx"/></svg>
<div class="gc" style="left:1043px;width:60px">Nein</div>
</div>
<div class="grow" style="top:108px;height:19px;line-height:21px;background:#ececec;left:0;width:1131px">
<div class="cb" style="top:3px"></div>
<svg style="left:22px;top:1px" width="16" height="16" viewBox="0 0 16 16" ><use href="#gear"/></svg>
<div class="gc" style="left:40px;width:110px">ESXi-1</div>
<div class="gc" style="left:150px;width:109px">Asset-0000069</div>
<div class="gc" style="left:259px;width:109px">nicht verfügbar</div>
<div class="gc" style="left:368px;width:109px">In Benutzung</div>
<div class="gc" style="left:477px;width:109px">nicht verfügbar</div>
<div class="gc" style="left:586px;width:109px">nicht verfügbar</div>
<div class="gc" style="left:695px;width:109px">nicht verfügbar</div>
<div class="gc" style="left:804px;width:109px">Computers\Server</div>
<div class="gc" style="left:913px;width:109px">nicht verfügbar</div>
<svg style="left:1026.8px;top:3px" width="13" height="13.4" viewBox="0 0 12.6 13"><use href="#rx"/></svg>
<div class="gc" style="left:1043px;width:60px">Nein</div>
</div>
<div class="grow" style="top:127px;height:19px;line-height:21px;background:#fff;left:0;width:1131px">
<div class="cb" style="top:3px"></div>
<svg style="left:22px;top:1px" width="16" height="16" viewBox="0 0 16 16" ><use href="#gear"/></svg>
<div class="gc" style="left:40px;width:110px">ESXi-2</div>
<div class="gc" style="left:150px;width:109px">Asset-0000070</div>
<div class="gc" style="left:259px;width:109px">nicht verfügbar</div>
<div class="gc" style="left:368px;width:109px">In Benutzung</div>
<div class="gc" style="left:477px;width:109px">nicht verfügbar</div>
<div class="gc" style="left:586px;width:109px">nicht verfügbar</div>
<div class="gc" style="left:695px;width:109px">nicht verfügbar</div>
<div class="gc" style="left:804px;width:109px">Computers\Server</div>
<div class="gc" style="left:913px;width:109px">nicht verfügbar</div>
<svg style="left:1026.8px;top:3px" width="13" height="13.4" viewBox="0 0 12.6 13"><use href="#rx"/></svg>
<div class="gc" style="left:1043px;width:60px">Nein</div>
</div>
<div class="grow" style="top:146px;height:19px;line-height:21px;background:#d5e8fc;left:0;width:1131px">
<div class="cb" style="top:3px"></div>
<svg style="left:4px;top:4px" width="11" height="11" viewBox="0 0 11 11"><path d="M1.4,5.6 L4.2,8.6 L9.8,1.8" fill="none" stroke="#222" stroke-width="1.7"/></svg>
<div class="abs" style="left:150px;top:0;width:109px;height:100%;background:#ececec"></div>
<svg style="left:22px;top:1px" width="16" height="16" viewBox="0 0 16 16" ><use href="#lap"/></svg>
<div class="gc" style="left:40px;width:110px">Notebooks</div>
<div class="gc" style="left:150px;width:109px">Asset-0000012</div>
<svg style="left:259px;top:0" width="109" height="19" viewBox="0 0 109 19"><rect x="0.3" y="6.0" width="3.5" height="6.3" fill="#d6cf98"/><rect x="7.2" y="4.9" width="3.6" height="9.1" fill="#5a5aa8"/><rect x="4.2" y="12.6" width="2.8" height="1.7" fill="#777788"/><rect x="11.6" y="7.4" width="3.1" height="1.7" fill="#9aa0d8"/><rect x="15.4" y="9.5" width="3.5" height="3.5" fill="#c4dcb0"/><rect x="19.3" y="7.7" width="6.6" height="1.7" fill="#8a8a90"/><rect x="19.3" y="12.6" width="2.8" height="1.7" fill="#8a8a90"/><rect x="30.1" y="8.8" width="2.8" height="2.1" fill="#7a7060"/><rect x="33.3" y="5.6" width="3.5" height="2.1" fill="#778890"/><rect x="33.3" y="7.7" width="3.5" height="4.5" fill="#eaf2fc"/><rect x="36.8" y="8.1" width="7.3" height="5.9" fill="#5a5aa8"/><rect x="33.3" y="12.3" width="3.5" height="2.1" fill="#7070a8"/><rect x="36.8" y="13.0" width="4.2" height="1.4" fill="#c08868"/><rect x="44.4" y="7.7" width="3.5" height="1.7" fill="#8a8a90"/><rect x="44.4" y="9.5" width="3.5" height="3.1" fill="#e0ecf8"/><rect x="44.4" y="12.6" width="3.5" height="3.8" fill="#808890"/><rect x="48.3" y="9.5" width="3.5" height="3.1" fill="#c4dcb0"/><rect x="52.1" y="7.4" width="3.8" height="3.5" fill="#7a7468"/><rect x="52.1" y="10.9" width="3.8" height="1.7" fill="#a8b8d0"/><rect x="52.1" y="12.6" width="3.8" height="1.7" fill="#8a8a90"/></svg>
<div class="gc" style="left:368px;width:109px">In Benutzung</div>
<div class="gc" style="left:477px;width:109px">nicht verfügbar</div>
<div class="gc" style="left:586px;width:109px">Consulting</div>
<div class="gc" style="left:695px;width:109px">Consulting</div>
<div class="gc" style="left:804px;width:109px">Computers\Notebo...</div>
<div class="gc" style="left:913px;width:109px">nicht verfügbar</div>
<svg style="left:1026.8px;top:3px" width="13" height="13.4" viewBox="0 0 12.6 13"><use href="#rx"/></svg>
<div class="gc" style="left:1043px;width:60px">Nein</div>
</div>
<div class="grow" style="top:165px;height:21px;line-height:24px;background:#fff;left:0;width:1131px">
<div class="cb" style="top:4px"></div>
<svg style="left:22px;top:2px" width="16" height="16" viewBox="0 0 16 16" ><use href="#lap"/></svg>
<div class="gc" style="left:40px;width:110px">4-COFFUH-W10</div>
<div class="gc" style="left:150px;width:109px">Asset-0000015</div>
<svg style="left:259px;top:0" width="109" height="21" viewBox="0 0 109 21"><rect x="1.1" y="7.6" width="2.8" height="8.7" fill="#4a4aa0"/><rect x="3.9" y="7.6" width="3.1" height="4.5" fill="#b4b4bc"/><rect x="7.0" y="10.8" width="3.1" height="5.6" fill="#fadca0"/><rect x="11.9" y="9.7" width="3.1" height="6.6" fill="#8890a8"/><rect x="15.1" y="10.8" width="2.8" height="5.6" fill="#3a6ac0"/><rect x="17.9" y="9.4" width="3.1" height="1.7" fill="#c8c090"/><rect x="21.0" y="10.8" width="3.1" height="5.6" fill="#5a5ab0"/><rect x="24.2" y="11.5" width="2.8" height="3.5" fill="#777060"/><rect x="27.0" y="14.6" width="3.1" height="1.7" fill="#a0c8f0"/><rect x="33.3" y="7.6" width="5.6" height="1.7" fill="#a8a8c8"/><rect x="33.3" y="10.8" width="5.6" height="1.7" fill="#a8a8c8"/><rect x="39.2" y="10.8" width="4.9" height="5.6" fill="#5a5ab0"/><rect x="44.1" y="9.7" width="3.1" height="1.7" fill="#c8c090"/><rect x="47.2" y="10.1" width="5.9" height="6.3" fill="#5050a8"/><rect x="53.2" y="10.8" width="8.7" height="5.6" fill="#fcd898"/><rect x="56.3" y="9.7" width="5.6" height="1.4" fill="#8a7460"/><rect x="61.9" y="12.9" width="3.1" height="2.1" fill="#5050a8"/><rect x="65.1" y="10.1" width="3.1" height="6.3" fill="#a89060"/><rect x="68.2" y="10.1" width="1.7" height="6.3" fill="#5050a8"/><rect x="70.0" y="10.8" width="5.9" height="5.6" fill="#f0d8a0"/><rect x="76.3" y="9.7" width="2.8" height="1.4" fill="#808080"/><rect x="79.1" y="11.5" width="2.8" height="4.9" fill="#e0f8fc"/></svg>
<div class="gc" style="left:368px;width:109px">In Benutzung</div>
<div class="gc" style="left:477px;width:109px">Köln</div>
<div class="gc" style="left:586px;width:109px">Consulting</div>
<div class="gc" style="left:695px;width:109px">Consulting</div>
<div class="gc" style="left:804px;width:109px">Computers\Notebo...</div>
<div class="gc" style="left:913px;width:109px">nicht verfügbar</div>
<svg style="left:1026.8px;top:4px" width="13" height="13.4" viewBox="0 0 12.6 13"><use href="#rx"/></svg>
<div class="gc" style="left:1043px;width:60px">Nein</div>
</div>
<div class="grow" style="top:186px;left:0;width:1131px;background:#ececec;height:19px"><div class="cb" style="top:2px"></div><svg style="left:22px;top:1px" width="16" height="16" viewBox="0 0 16 16" ><use href="#lap"/></svg><svg style="left:1028px;top:3px" width="13" height="13" viewBox="0 0 12.6 13"><use href="#rx"/></svg></div>
<div class="abs" style="left:1131px;top:0;width:17px;height:192px;background:#f0f0f0"><svg style="left:4px;top:5px" width="9" height="6" viewBox="0 0 9.2 5.6"><path d="M0.8,4.8 L4.6,1 L8.4,4.8" fill="none" stroke="#555" stroke-width="1.5"/></svg><div class="abs" style="left:0;top:17px;width:17px;height:67px;background:#cdcdcd"></div><svg style="left:4px;top:181px" width="9" height="6" viewBox="0 0 9.2 5.6"><path d="M0.8,0.8 L4.6,4.6 L8.4,0.8" fill="none" stroke="#555" stroke-width="1.5"/></svg></div>
</div>
<div class="abs" style="left:323px;top:280px;width:38px;height:21px;background:#cccccc;border:1px solid #bfbfbf"><svg style="left:9.0px;top:3.4px" width="18" height="11.25" viewBox="0 0 16 10"><path d="M7.4,1 L3.4,5 L7.4,9 M12.6,1 L8.6,5 L12.6,9" fill="none" stroke="#8a8a8a" stroke-width="2"/></svg></div>
<div class="abs" style="left:369px;top:280px;width:38px;height:21px;background:#cccccc;border:1px solid #bfbfbf"><svg style="left:9.0px;top:3.4px" width="18" height="11.25" viewBox="0 0 16 10"><path d="M10,1 L6,5 L10,9" fill="none" stroke="#8a8a8a" stroke-width="2"/></svg></div>
<div class="abs" style="left:568px;top:280px;width:38px;height:21px;background:#e1e1e1;border:1px solid #adadad"><svg style="left:9.0px;top:3.4px" width="18" height="11.25" viewBox="0 0 16 10"><path d="M6,1 L10,5 L6,9" fill="none" stroke="#444" stroke-width="2"/></svg></div>
<div class="abs" style="left:614px;top:280px;width:38px;height:21px;background:#e1e1e1;border:1px solid #adadad"><svg style="left:9.0px;top:3.4px" width="18" height="11.25" viewBox="0 0 16 10"><path d="M3.4,1 L7.4,5 L3.4,9 M8.6,1 L12.6,5 L8.6,9" fill="none" stroke="#444" stroke-width="2"/></svg></div>
<span class="t" style="left:413px;top:280px;line-height:21px">Seite</span>
<div class="abs sunk" style="left:445px;top:280px;width:70px;height:21px;line-height:19px;padding-left:3px">1</div>
<span class="t" style="left:521px;top:280px;line-height:21px">von 1</span>
<span class="t" style="left:1244px;top:280px;line-height:21px;letter-spacing:-0.2px">Ergebnisse pro Seite</span>
<div class="abs combo" style="left:1350px;top:281px;width:122px;height:19px"><span class="t" style="left:2px;top:0;line-height:17px">100</span><svg style="left:107px;top:6px" width="10" height="6" viewBox="0 0 9.2 5.6"><use href="#chc"/></svg></div>
<span class="t" style="left:322px;top:330px;font-size:19.5px;line-height:26px;color:#4a4a4a">Asset: &quot;Notebooks&quot;</span>
<div class="abs" style="left:322px;top:384px;width:1149px;height:306px;background:#fff;border:1px solid #dcdcdc;overflow:hidden">
<span class="lbl" style="left:13px;top:8px">Assetname:</span><div class="inp" style="left:90px;top:7px;width:458px;line-height:21px;">Notebooks</div>
<span class="lbl" style="left:564px;top:8px">Assettyp:</span><div class="inp" style="left:653px;top:7px;width:465px;line-height:21px;">Computers\Notebooks</div>
<span class="lbl" style="left:13px;top:54px">Benutzer:</span><div class="inp" style="left:90px;top:54px;width:458px;"><svg style="left:0;top:0" width="70" height="19" viewBox="0 0 70 19"><rect x="2.0" y="14.0" width="55.9" height="1.9" fill="#6060f0"/><rect x="2.0" y="5.1" width="3.0" height="7.2" fill="#2020e8"/><rect x="5.0" y="12.1" width="1.9" height="1.4" fill="#5050e8"/><rect x="7.1" y="4.5" width="2.8" height="8.8" fill="#e8d8f8"/><rect x="10.1" y="7.7" width="1.9" height="1.9" fill="#5080e0"/><rect x="10.1" y="9.6" width="1.9" height="3.7" fill="#d0f4f4"/><rect x="12.0" y="5.4" width="3.0" height="7.9" fill="#f4d0f0"/><rect x="15.0" y="8.2" width="1.9" height="4.7" fill="#e0e0fa"/><rect x="17.1" y="7.2" width="4.4" height="2.3" fill="#5040e0"/><rect x="17.1" y="9.6" width="3.0" height="2.6" fill="#c0f0f0"/><rect x="17.1" y="12.1" width="7.7" height="1.4" fill="#4040e0"/><rect x="22.2" y="4.5" width="2.6" height="7.7" fill="#f4d4f4"/><rect x="22.2" y="7.2" width="2.6" height="1.4" fill="#a0a0f0"/><rect x="25.3" y="8.2" width="1.9" height="4.7" fill="#d8f4f4"/><rect x="30.2" y="5.1" width="1.6" height="7.9" fill="#2020e8"/><rect x="32.0" y="7.2" width="2.8" height="3.7" fill="#4060e0"/><rect x="35.0" y="4.5" width="2.8" height="7.9" fill="#f0d0f0"/><rect x="35.0" y="5.1" width="2.8" height="1.6" fill="#a0a0f0"/><rect x="35.0" y="12.4" width="2.8" height="1.2" fill="#7070f0"/><rect x="38.1" y="6.3" width="1.9" height="6.1" fill="#d8d8f8"/><rect x="40.2" y="8.2" width="2.8" height="4.0" fill="#c8f4f0"/><rect x="40.2" y="12.1" width="7.5" height="1.4" fill="#5050e0"/><rect x="43.4" y="8.6" width="4.2" height="3.5" fill="#f0d0f0"/><rect x="45.1" y="7.2" width="2.8" height="1.4" fill="#6060e0"/><rect x="49.9" y="8.2" width="3.0" height="4.2" fill="#3010e0"/><rect x="53.2" y="7.2" width="4.7" height="3.3" fill="#3030e8"/><rect x="53.2" y="10.5" width="4.7" height="1.9" fill="#b0e8f8"/><rect x="53.2" y="12.4" width="4.7" height="1.2" fill="#4040e0"/></svg></div>
<span class="lbl" style="left:564px;top:54px">Standort:</span><div class="inp" style="left:653px;top:54px;width:465px;"></div>
<span class="lbl" style="left:13px;top:81px">Abteilung:</span><div class="inp" style="left:90px;top:81px;width:458px;"><a class="lk">Consulting</a></div>
<span class="lbl" style="left:564px;top:81px">Kostenstelle:</span><div class="inp" style="left:653px;top:81px;width:465px;"><a class="lk">Consulting</a></div>
<span class="lbl" style="left:13px;top:108px">Hersteller:</span><div class="inp" style="left:90px;top:108px;width:458px;"><a class="lk">Lenovo</a></div>
<span class="lbl" style="left:564px;top:108px">Anbieter:</span><div class="inp" style="left:653px;top:108px;width:465px;"></div>
<span class="lbl" style="left:13px;top:135px">Dienstleister:</span><div class="inp" style="left:90px;top:135px;width:458px;"></div>
<span class="lbl" style="left:564px;top:135px">Vertrag:</span><div class="inp" style="left:653px;top:135px;width:465px;"></div>
<span class="lbl" style="left:13px;top:182px">Status:</span><div class="inp" style="left:90px;top:182px;width:458px;">In Benutzung</div>
<span class="lbl" style="left:564px;top:182px">Asset Collection:</span><div class="inp" style="left:653px;top:182px;width:465px;"></div>
<span class="lbl" style="left:13px;top:209px">Modell:</span><div class="inp" style="left:90px;top:209px;width:458px;">T560</div>
<span class="lbl" style="left:564px;top:209px">Inventarnummer:</span><div class="inp" style="left:653px;top:209px;width:465px;">Asset-0000012</div>
<span class="lbl" style="left:13px;top:236px">Seriennummer:</span><div class="inp" style="left:90px;top:236px;width:458px;">SV4JK5</div>
<span class="lbl" style="left:13px;top:35px;font-weight:bold;font-size:12px;line-height:13px">Stammdaten</span>
<span class="lbl" style="left:13px;top:162.5px;font-weight:bold;font-size:12px;line-height:13px">Zusätzliche Daten</span>
<span class="lbl" style="left:13px;top:263.5px;line-height:13px">Beschreibung:</span>
<div class="inp" style="left:13px;top:281px;width:1105px;height:40px"><div class="abs" style="left:1085px;top:0;width:1px;height:38px;background:#fafafa"></div><svg style="left:1090px;top:7px" width="9" height="6" viewBox="0 0 9.2 5.6"><path d="M0.8,4.8 L4.6,1 L8.4,4.8" fill="none" stroke="#bdbdbd" stroke-width="1.7"/></svg></div>
<div class="abs" style="left:1129px;top:0;width:16px;height:302px;background:#f0f0f0"><svg style="left:3.5px;top:8px" width="9" height="6" viewBox="0 0 9.2 5.6"><path d="M0.8,4.8 L4.6,1 L8.4,4.8" fill="none" stroke="#444" stroke-width="1.7"/></svg><div class="abs" style="left:0;top:20px;width:15px;height:253px;background:#cdcdcd"></div><svg style="left:3.5px;top:290px" width="9" height="6" viewBox="0 0 9.2 5.6"><path d="M0.8,0.8 L4.6,4.6 L8.4,0.8" fill="none" stroke="#444" stroke-width="1.9"/></svg></div>
<div class="abs" style="left:0;top:302px;width:1147px;height:3px;background:#fff"></div>
</div>
<div class="abs" style="left:322px;top:363px;width:60px;height:22px;background:#fff;border:1px solid #dcdcdc;border-bottom:none;line-height:19px;padding-left:7px;white-space:nowrap">Allgemein</div>
<div class="tab" style="left:382px;top:366px;width:53.5px">Finanzen</div>
<div class="tab" style="left:435.5px;top:366px;width:161.0px">Benutzerdefinierte Felder (1:1)</div>
<div class="tab" style="left:596.5px;top:366px;width:160.5px">Benutzerdefinierte Felder (1:n)</div>
<div class="tab" style="left:757px;top:366px;width:66.5px">Dokumente</div>
<div class="tab" style="left:823.5px;top:366px;width:72.5px">Beziehungen</div>
<div class="tab" style="left:896px;top:366px;width:45.5px">Tickets</div>
<div class="tab" style="left:941.5px;top:366px;width:52.0px">Ausleihe</div>
<div class="tab" style="left:993.5px;top:366px;width:98.5px">Änderungsverlauf</div>
<div class="tab" style="left:1092px;top:366px;width:50.5px">Lizenzen</div>
</div>
<div id="status" class="abs"><span class="t" style="left:1px;top:7px;letter-spacing:-0.07px">© Aagon GmbH 2002 - 2025, all rights reserved</span></div>
</body>
</html>
